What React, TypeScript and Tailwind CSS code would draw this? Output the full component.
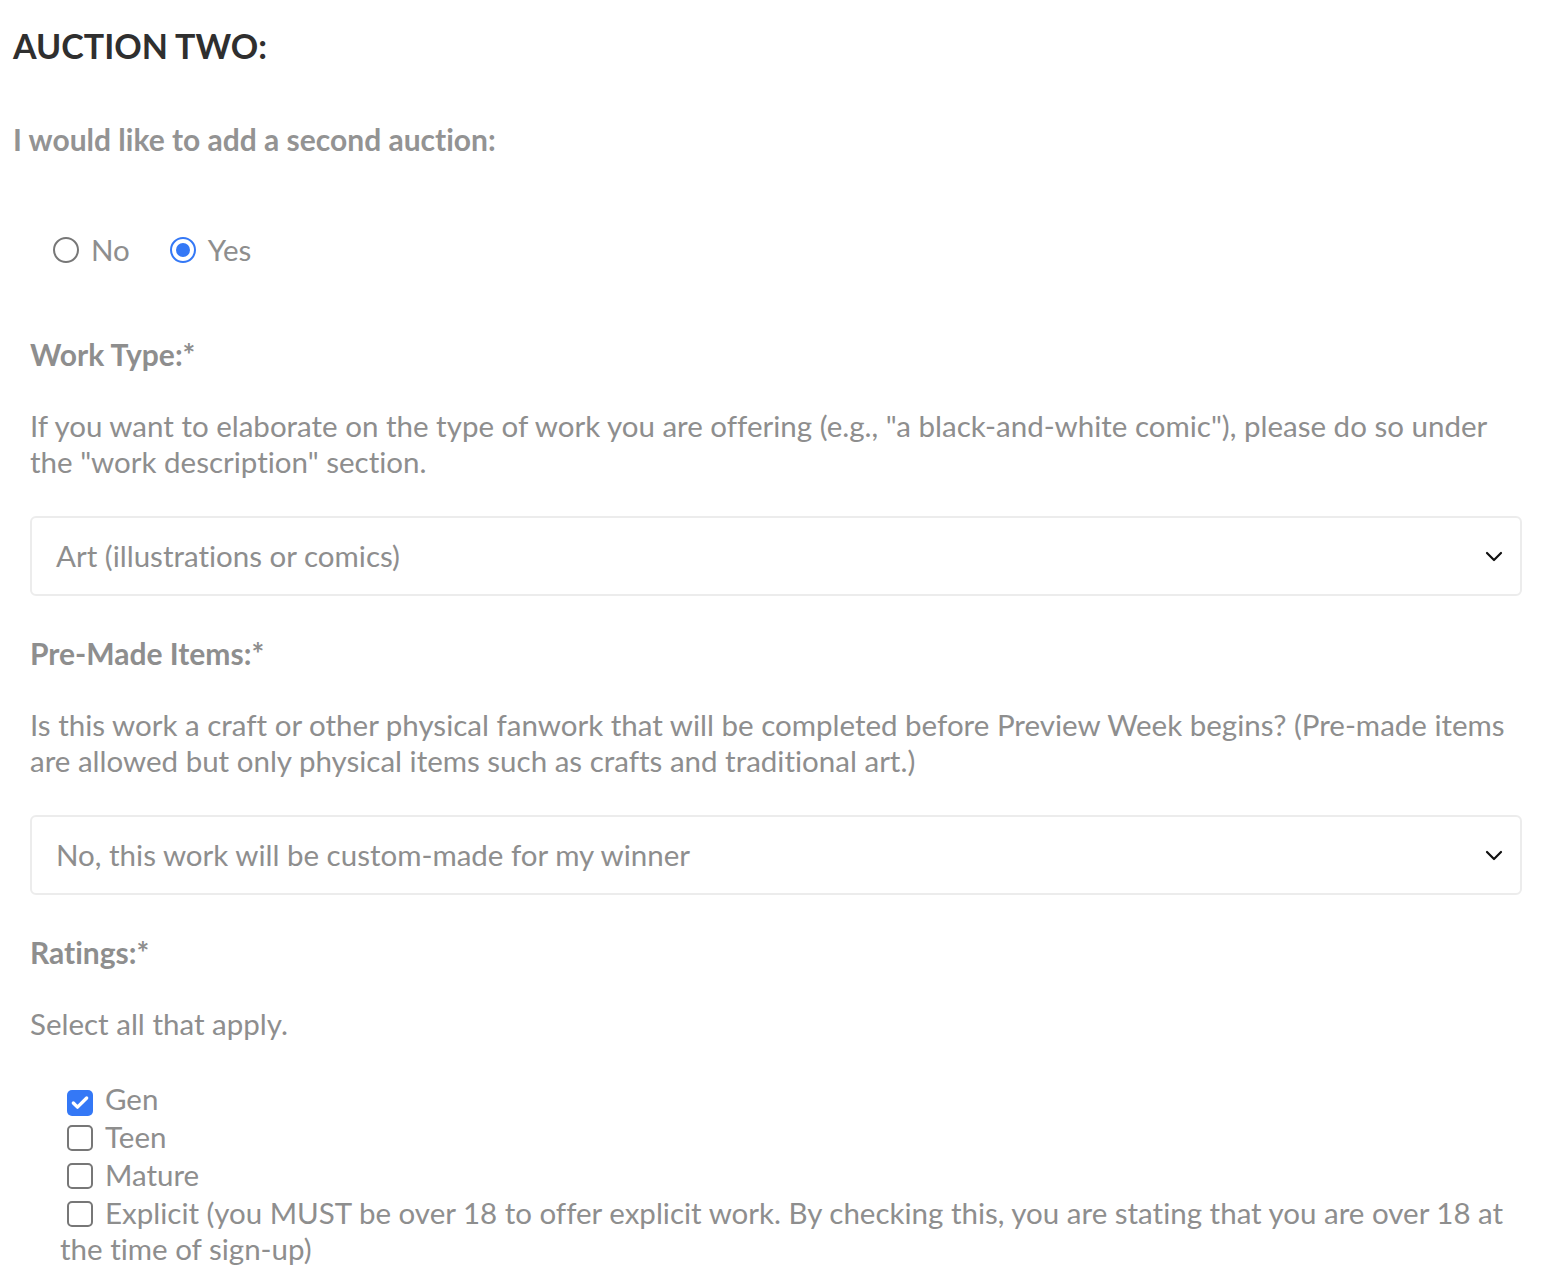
import { Check } from "lucide-react";

const ratings = [
  { label: "Gen", checked: true },
  { label: "Teen", checked: false },
  { label: "Mature", checked: false },
  {
    label:
      "Explicit (you MUST be over 18 to offer explicit work. By checking this, you are stating that you are over 18 at the time of sign-up)",
    checked: false,
  },
];

const Radio = ({ label, checked }: { label: string; checked?: boolean }) => (
  <label className="flex items-center gap-[12px]">
    <span
      className={`w-[26px] h-[26px] rounded-full flex items-center justify-center border-2 ${
        checked ? "border-[#3478f6]" : "border-[#777]"
      }`}
    >
      {checked && <span className="w-[14px] h-[14px] rounded-full bg-[#3478f6]" />}
    </span>
    <span className="text-[29.5px] text-[#8e8e8e]">{label}</span>
  </label>
);

const SelectBox = ({ value }: { value: string }) => (
  <div className="h-[80px] border-2 border-[#ececec] rounded-[6px] flex items-center justify-between pl-[24px] pr-[17px]">
    <span className="text-[29.5px] text-[#8e8e8e]">{value}</span>
    <svg width="18" height="11" viewBox="0 0 18 11" fill="none" stroke="#111" strokeWidth="2.2" strokeLinecap="round" strokeLinejoin="round">
      <polyline points="2,2 9,9 16,2" />
    </svg>
  </div>
);

const Box = ({ checked }: { checked: boolean }) =>
  checked ? (
    <span className="inline-flex w-[26px] h-[26px] rounded-[5px] bg-[#3478f6] items-center justify-center align-[-3px] ml-[7px] mr-[12px]">
      <Check size={20} strokeWidth={4} className="text-white" />
    </span>
  ) : (
    <span className="inline-block w-[26px] h-[26px] rounded-[5px] border-2 border-[#777] align-[-3px] ml-[7px] mr-[12px]" />
  );

export default function App() {
  return (
    <div className="min-h-screen bg-white font-['Lato','Noto_Sans',sans-serif] [font-variant-ligatures:none] px-[13px] pt-[24px]">
      <h2 className="text-[34px] font-bold text-[#2f2f2f] leading-[44px]">AUCTION TWO:</h2>
      <p className="mt-[51px] text-[30px] font-bold text-[#939393] leading-[40px]">
        I would like to add a second auction:
      </p>

      <div className="mt-[71px] flex items-center gap-[40px] pl-[40px] h-[40px]">
        <Radio label="No" />
        <Radio label="Yes" checked />
      </div>

      <div className="pl-[17px] pr-[21px]">
        <h3 className="mt-[64px] text-[30px] font-bold text-[#8e8e8e] leading-[40px]">Work Type:*</h3>
        <p className="mt-[34px] text-[29.5px] text-[#8e8e8e] leading-[36px]">
          If you want to elaborate on the type of work you are offering (e.g., "a black-and-white comic"), please do so
          under the "work description" section.
        </p>
        <div className="mt-[36px]">
          <SelectBox value="Art (illustrations or comics)" />
        </div>

        <h3 className="mt-[37px] text-[30px] font-bold text-[#8e8e8e] leading-[40px]">Pre-Made Items:*</h3>
        <p className="mt-[34px] text-[29.5px] text-[#8e8e8e] leading-[36px]">
          Is this work a craft or other physical fanwork that will be completed before Preview Week begins? (Pre-made
          items are allowed but only physical items such as crafts and traditional art.)
        </p>
        <div className="mt-[36px]">
          <SelectBox value="No, this work will be custom-made for my winner" />
        </div>

        <h3 className="mt-[37px] text-[30px] font-bold text-[#8e8e8e] leading-[40px]">Ratings:*</h3>
        <p className="mt-[34px] text-[29.5px] text-[#8e8e8e] leading-[36px]">Select all that apply.</p>

        <div className="mt-[37px] pl-[30px] text-[29.5px] text-[#8e8e8e] leading-[36px]">
          {ratings.map((r) => (
            <div key={r.label} className="pt-[2px]">
              <Box checked={r.checked} />
              {r.label}
            </div>
          ))}
        </div>
      </div>
    </div>
  );
}
